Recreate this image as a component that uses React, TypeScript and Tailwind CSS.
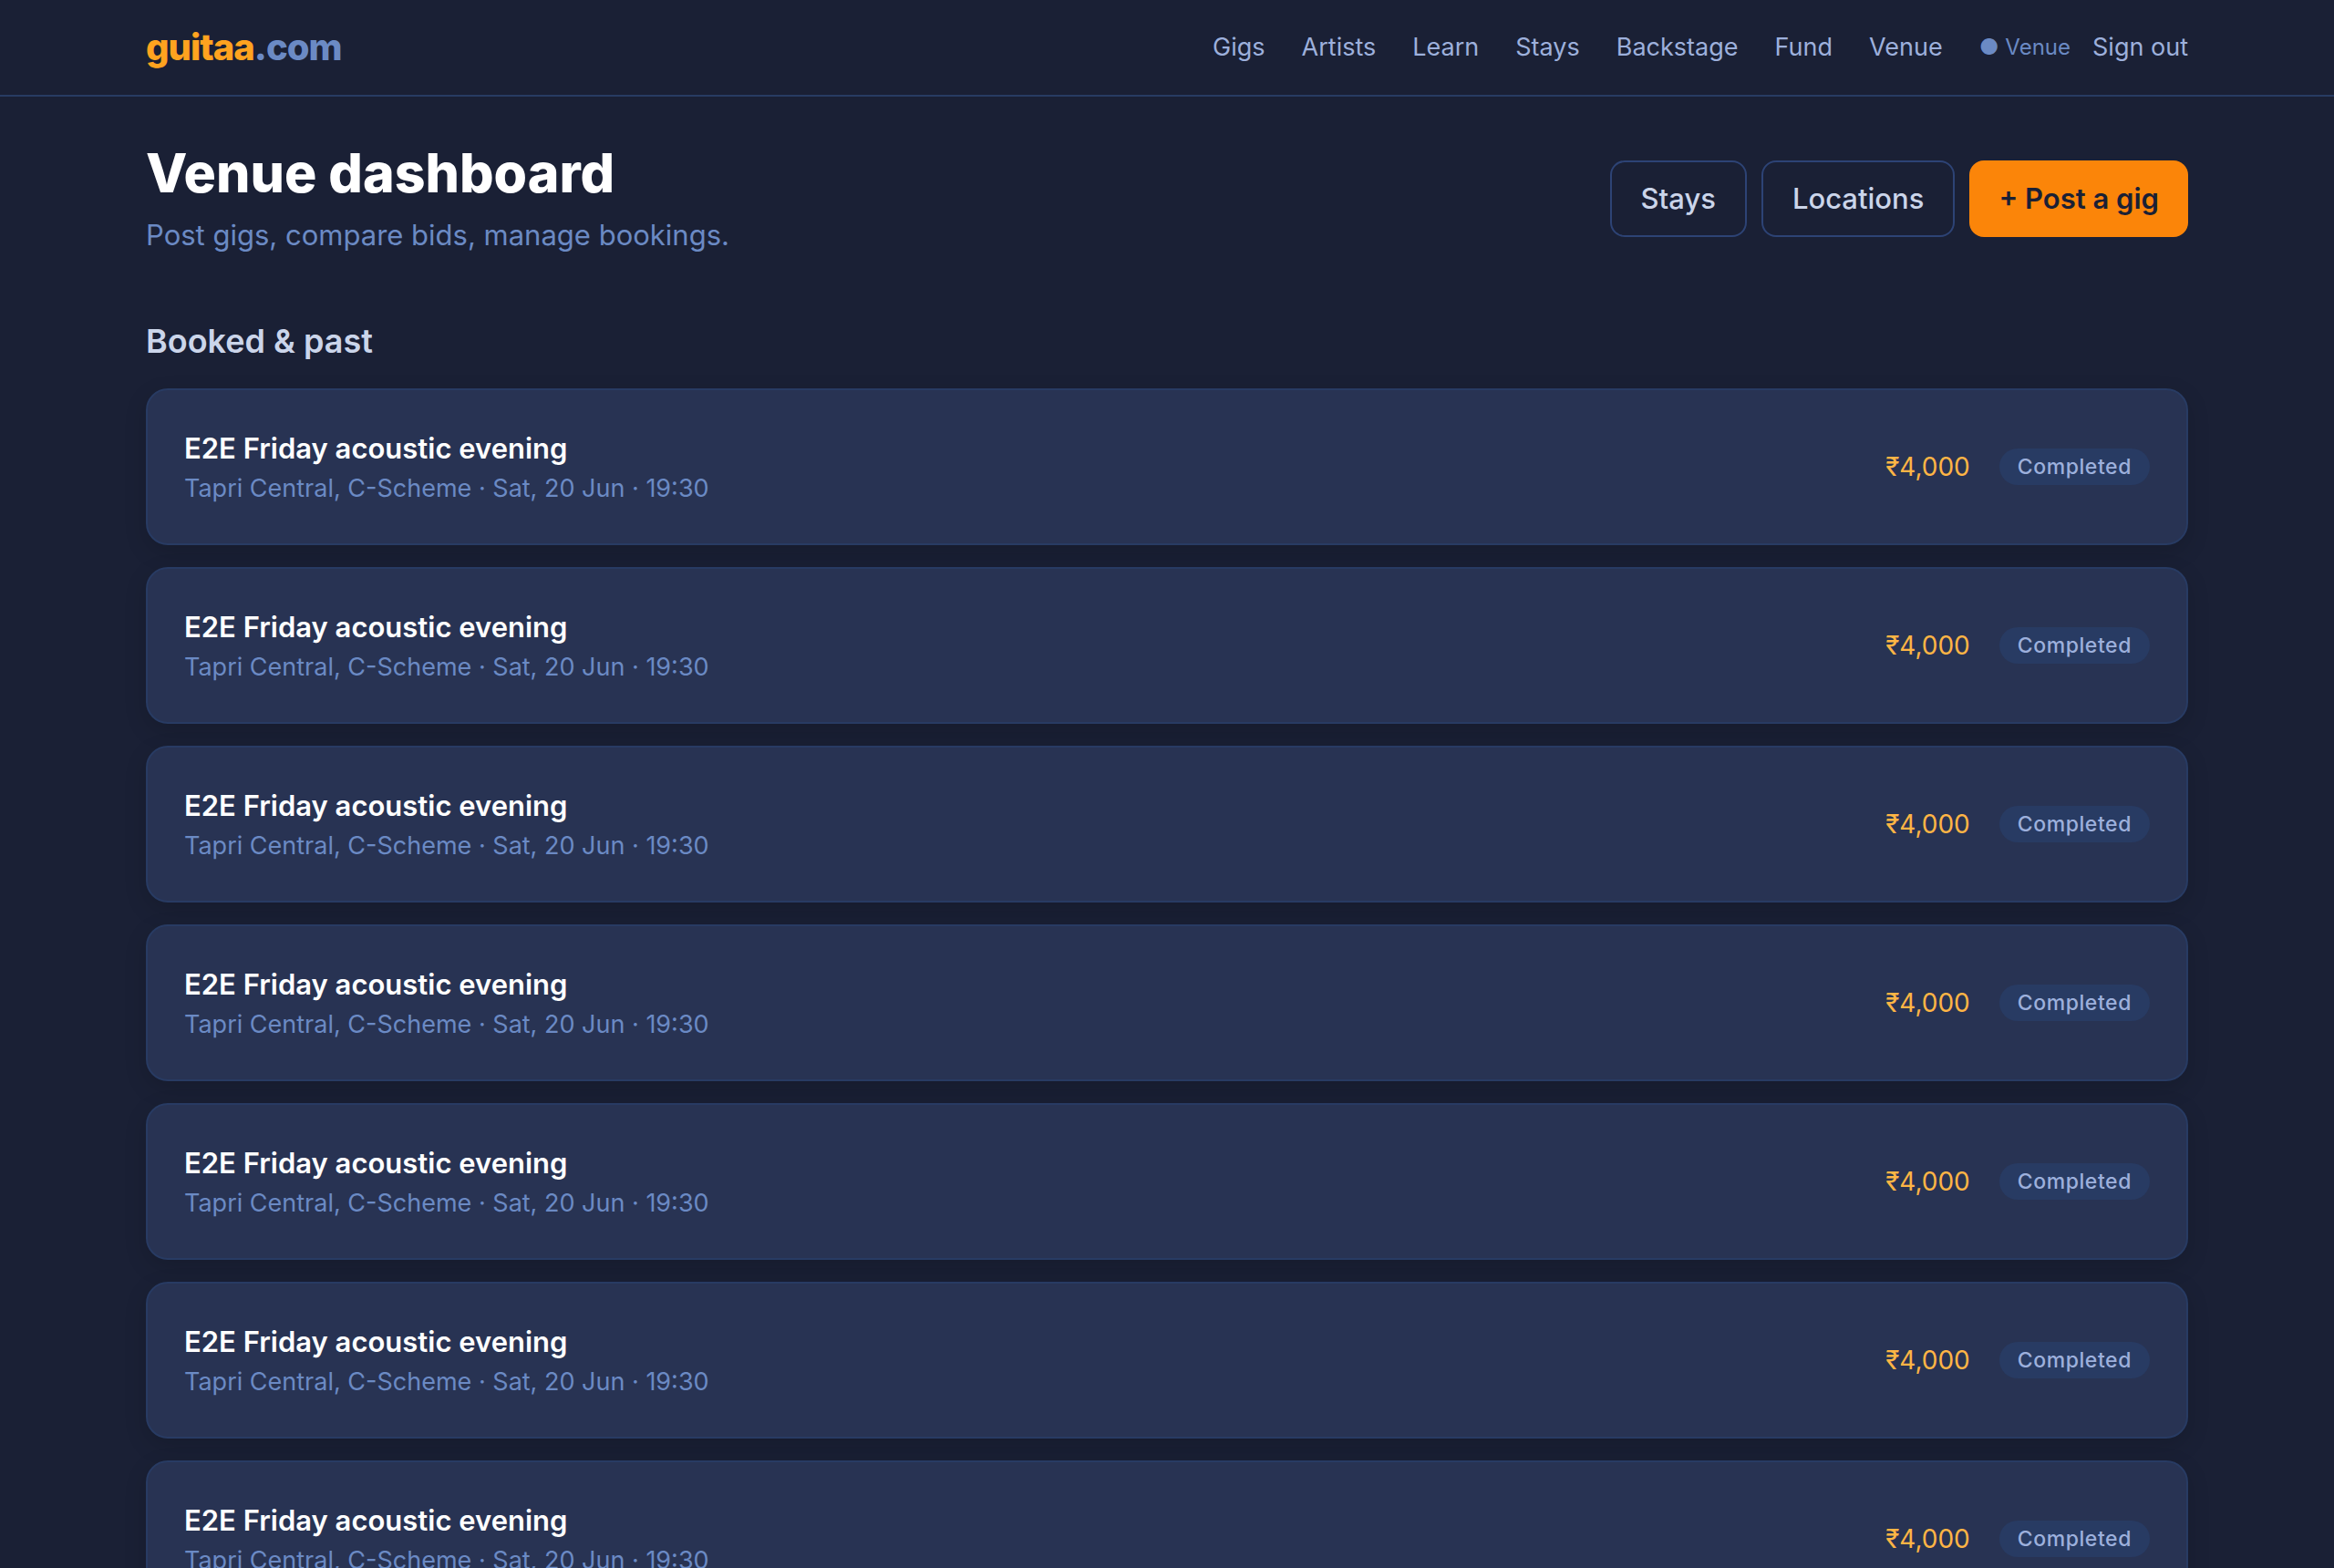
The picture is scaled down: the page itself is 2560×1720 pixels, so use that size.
const navLinks = ["Gigs", "Artists", "Learn", "Stays", "Backstage", "Fund", "Venue"];

const bookings = Array.from({ length: 7 }, (_, i) => ({
  id: i + 1,
  title: "E2E Friday acoustic evening",
  details: "Tapri Central, C-Scheme · Sat, 20 Jun · 19:30",
  price: "₹4,000",
  status: "Completed",
}));

function Header() {
  return (
    <header className="border-b-2 border-[#283b63]">
      <div className="mx-auto flex max-w-[2304px] items-center justify-between px-8 py-6">
        <a href="#" className="text-[40px] leading-14 font-extrabold tracking-tight text-[#ffa31f]">
          guitaa<span className="text-[#6b8ac4]">.com</span>
        </a>

        <nav className="flex items-center gap-10 text-[27px] leading-10 text-[#9db0dc]">
          {navLinks.map((label) => (
            <a key={label} href="#" className="hover:text-white">
              {label}
            </a>
          ))}
          <div className="flex items-center gap-6">
            <span className="text-2xl text-[#6b8ac4]">● Venue</span>
            <button type="button" className="hover:text-white">
              Sign out
            </button>
          </div>
        </nav>
      </div>
    </header>
  );
}

export default function App() {
  return (
    <div className="min-h-screen bg-[#1a2035] font-['Inter',sans-serif] text-[#cbd5ea]">
      <Header />

      <main className="mx-auto max-w-[2304px] px-8 py-12">
        {/* Title and actions */}
        <div className="flex items-center justify-between">
          <div>
            <h1 className="text-[59px] leading-18 font-extrabold text-white">Venue dashboard</h1>
            <p className="mt-2 text-[31px] leading-12 text-[#6b8ac4]">Post gigs, compare bids, manage bookings.</p>
          </div>
          <div className="flex gap-4 text-[31px] leading-12">
            <a href="#" className="rounded-2xl border-2 border-[#2d4375] px-8 py-4 font-medium">
              Stays
            </a>
            <a href="#" className="rounded-2xl border-2 border-[#2d4375] px-8 py-4 font-medium">
              Locations
            </a>
            <button
              type="button"
              className="rounded-2xl bg-[#fb8509] px-8 py-4 font-semibold text-[#1a2035]"
            >
              + Post a gig
            </button>
          </div>
        </div>

        {/* Bookings */}
        <section className="mt-16">
          <h2 className="text-4xl leading-14 font-semibold">Booked &amp; past</h2>
          <ul className="mt-6 flex flex-col gap-6">
            {bookings.map((booking) => (
              <li
                key={booking.id}
                className="flex items-center justify-between rounded-3xl border-2 border-[#283b63] bg-[#283353] p-10 shadow-[0_8px_24px_rgba(0,0,0,0.15)]"
              >
                <div>
                  <h3 className="text-[31px] leading-12 font-semibold text-white">{booking.title}</h3>
                  <p className="text-[27px] leading-10 text-[#6b8ac4]">{booking.details}</p>
                </div>
                <div className="flex items-center gap-8">
                  <span className="text-[28px] leading-10 text-[#ffb545]">{booking.price}</span>
                  <span className="rounded-full bg-[#283b63] px-5 py-1 text-[23px] leading-8 font-medium tracking-wide text-[#9db0dc]">
                    {booking.status}
                  </span>
                </div>
              </li>
            ))}
          </ul>
        </section>
      </main>
    </div>
  );
}
